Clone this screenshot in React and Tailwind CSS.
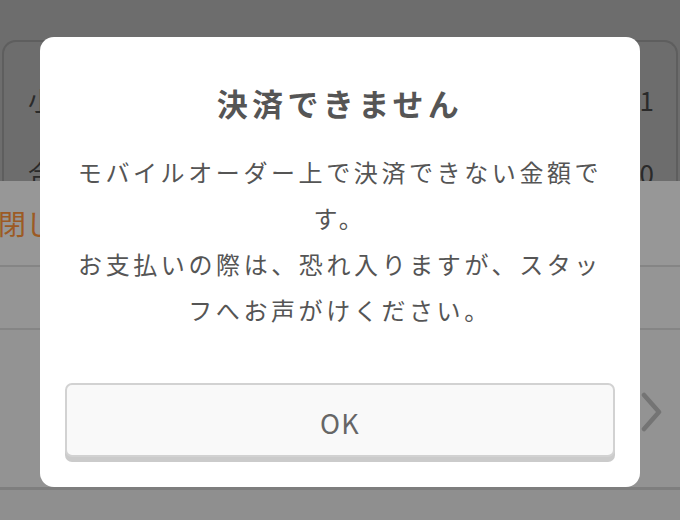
const jp = { fontFamily: '"Noto Sans CJK JP", "Noto Sans", sans-serif' };

function Chevron() {
  return (
    <svg width="24" height="40" viewBox="0 0 24 40" fill="none">
      <path
        d="M4 3 L19 20 L4 37"
        stroke="#747474"
        strokeWidth="4.5"
        strokeLinecap="round"
        strokeLinejoin="round"
      />
    </svg>
  );
}

function Page() {
  return (
    <div className="flex h-full flex-col" style={jp}>
      {/* dimmed order summary */}
      <div className="h-[181px] shrink-0 bg-[#6d6d6d] px-[2px] pt-[40px]">
        <div className="h-full rounded-t-[14px] border-2 border-b-0 border-[#5e5e5e]">
          <div className="flex items-center justify-between pl-[24px] pr-[22px] pt-[38px] text-[26px] text-[#2a2a2a]">
            <span>小計</span>
            <span>1</span>
          </div>
          <div className="flex items-center justify-between pl-[24px] pr-[22px] pt-[34px] text-[26px] text-[#2a2a2a]">
            <span>合計</span>
            <span>0</span>
          </div>
        </div>
      </div>

      {/* dimmed bottom sheet */}
      <div className="flex flex-1 flex-col bg-[#979797]">
        <div className="flex h-[86px] shrink-0 items-center border-b-2 border-[#858585]">
          <span className="-ml-[2px] text-[28px] text-[#9c5a24]">閉じる</span>
        </div>
        <div className="h-[63px] shrink-0 border-b-2 border-[#858585] bg-[#959595]" />
        <div className="flex h-[157px] shrink-0 items-center justify-end bg-[#939393] pr-[16px]">
          <div className="mt-[6px]">
            <Chevron />
          </div>
        </div>
        <div className="h-[3px] shrink-0 bg-[#7e7e7e]" />
        <div className="flex-1 bg-[#8f8f8f]" />
      </div>
    </div>
  );
}

function Dialog() {
  return (
    <div
      className="absolute left-[40px] top-[37px] flex h-[450px] w-[600px] flex-col items-center rounded-[14px] bg-white"
      style={jp}
    >
      <h2 className="mt-[46px] text-[31px] font-bold leading-[40px] tracking-[0.14em] text-[#555555]">
        決済できません
      </h2>
      <p className="mt-[26px] text-center text-[24px] leading-[46px] tracking-[0.15em] text-[#555555]">
        モバイルオーダー上で決済できない金額で
        <br />
        す。
        <br />
        お支払いの際は、恐れ入りますが、スタッ
        <br />
        フへお声がけください。
      </p>
      <button className="mt-[50px] flex h-[74px] w-[550px] items-center justify-center rounded-[7px] border-2 border-[#d2d2d2] bg-[#f9f9f9] pt-[6px] text-[27px] tracking-[0.05em] text-[#666666] shadow-[0_5px_0_#cbcbcb]">
        OK
      </button>
    </div>
  );
}

export default function App() {
  return (
    <div className="relative h-[520px] w-[680px] overflow-hidden bg-[#6d6d6d]">
      <Page />
      <Dialog />
    </div>
  );
}
